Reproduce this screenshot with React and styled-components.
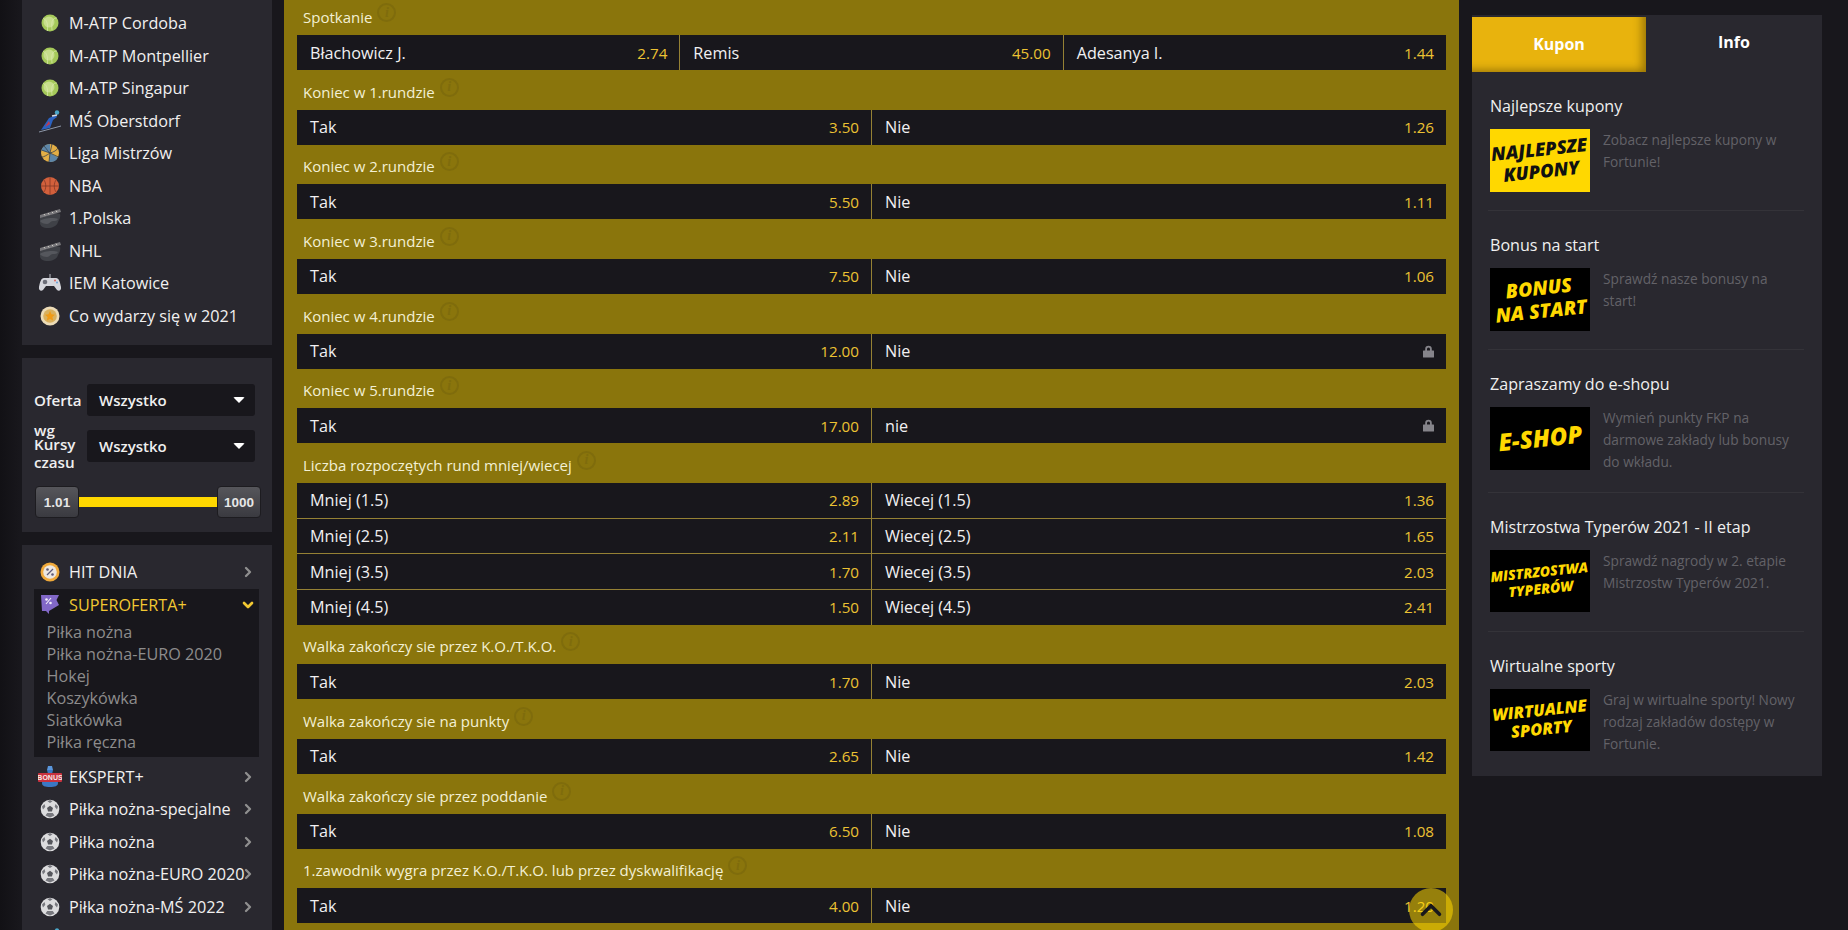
import styled, { createGlobalStyle } from "styled-components";
import { ChevronRight, ChevronDown, ChevronUp } from "lucide-react";

const topLinks = [
  ["tennis", "M-ATP Cordoba"],
  ["tennis", "M-ATP Montpellier"],
  ["tennis", "M-ATP Singapur"],
  ["ski", "MŚ Oberstdorf"],
  ["volley", "Liga Mistrzów"],
  ["basket", "NBA"],
  ["hockey", "1.Polska"],
  ["hockey", "NHL"],
  ["pad", "IEM Katowice"],
  ["star", "Co wydarzy się w 2021"],
];

const subLinks = ["Piłka nożna", "Piłka nożna-EURO 2020", "Hokej", "Koszykówka", "Siatkówka", "Piłka ręczna"];

const sportLinks = [
  ["bonus", "EKSPERT+"],
  ["soccer", "Piłka nożna-specjalne"],
  ["soccer", "Piłka nożna"],
  ["soccer", "Piłka nożna-EURO 2020"],
  ["soccer", "Piłka nożna-MŚ 2022"],
  ["ski", "Skoki narciarskie"],
];

const yesNo = (title, yes, no, noLabel = "Nie") => ({
  title,
  rows: [[["Tak", yes], [noLabel, no]]],
});

const markets = [
  { title: "Spotkanie", rows: [[["Błachowicz J.", "2.74"], ["Remis", "45.00"], ["Adesanya I.", "1.44"]]] },
  yesNo("Koniec w 1.rundzie", "3.50", "1.26"),
  yesNo("Koniec w 2.rundzie", "5.50", "1.11"),
  yesNo("Koniec w 3.rundzie", "7.50", "1.06"),
  yesNo("Koniec w 4.rundzie", "12.00", null),
  yesNo("Koniec w 5.rundzie", "17.00", null, "nie"),
  {
    title: "Liczba rozpoczętych rund mniej/wiecej",
    rows: [
      [["Mniej (1.5)", "2.89"], ["Wiecej (1.5)", "1.36"]],
      [["Mniej (2.5)", "2.11"], ["Wiecej (2.5)", "1.65"]],
      [["Mniej (3.5)", "1.70"], ["Wiecej (3.5)", "2.03"]],
      [["Mniej (4.5)", "1.50"], ["Wiecej (4.5)", "2.41"]],
    ],
  },
  yesNo("Walka zakończy sie przez K.O./T.K.O.", "1.70", "2.03"),
  yesNo("Walka zakończy sie na punkty", "2.65", "1.42"),
  yesNo("Walka zakończy sie przez poddanie", "6.50", "1.08"),
  yesNo("1.zawodnik wygra przez K.O./T.K.O. lub przez dyskwalifikację", "4.00", "1.20"),
];

const promos = [
  { title: "Najlepsze kupony", lines: ["NAJLEPSZE", "KUPONY"], size: 18.5, light: true, text: "Zobacz najlepsze kupony w Fortunie!" },
  { title: "Bonus na start", lines: ["BONUS", "NA START"], size: 19.5, text: "Sprawdź nasze bonusy na start!" },
  { title: "Zapraszamy do e-shopu", lines: ["E-SHOP"], size: 24, text: "Wymień punkty FKP na darmowe zakłady lub bonusy do wkładu." },
  { title: "Mistrzostwa Typerów 2021 - II etap", lines: ["MISTRZOSTWA", "TYPERÓW"], size: 14, text: "Sprawdź nagrody w 2. etapie Mistrzostw Typerów 2021." },
  { title: "Wirtualne sporty", lines: ["WIRTUALNE", "SPORTY"], size: 16.5, text: "Graj w wirtualne sporty! Nowy rodzaj zakładów dostępy w Fortunie." },
];

const GlobalStyle = createGlobalStyle`
  html, body {
    margin: 0;
    height: 100%;
    overflow: hidden;
    background: #18171c;
  }
  body {
    font-family: "Open Sans", "Noto Sans", sans-serif;
    color: #fff;
  }
  * {
    box-sizing: border-box;
  }
`;

const Page = styled.div`
  position: relative;
  display: flex;
  align-items: flex-start;
  height: 930px;
  padding-left: 22px;
  overflow: hidden;
  background: linear-gradient(90deg, #121115 0, #18171c 20px);
`;

const Sidebar = styled.aside`
  display: flex;
  flex-direction: column;
  gap: 13px;
  width: 250px;
  margin-right: 12px;
  flex-shrink: 0;
`;

const Panel = styled.div`
  background: #29282f;
  padding: ${(p) => p.$padding || "0"};
`;

const NavRow = styled.div`
  position: relative;
  display: flex;
  align-items: center;
  height: 32.5px;
  font-size: 16.2px;
  color: ${(p) => (p.$active ? "#f2c832" : "#f1f0f0")};
  white-space: nowrap;
`;

const NavIcon = styled.span`
  display: flex;
  align-items: center;
  justify-content: center;
  width: 35px;
  padding-right: 4px;
  flex-shrink: 0;
`;

const NavArrow = styled.span`
  position: absolute;
  right: 3px;
  top: 50%;
  display: flex;
  transform: translateY(-50%);
  color: ${(p) => (p.$active ? "#f2c832" : "#8f8f8f")};
`;

const ActiveGroup = styled.div`
  background: #18171c;
  padding-bottom: 4px;
  margin-bottom: 3.5px;
`;

const SubLink = styled.div`
  height: 22px;
  line-height: 22px;
  padding-left: 12.5px;
  font-size: 16.2px;
  color: #8d8c8c;
  white-space: nowrap;
`;

const FilterRow = styled.div`
  display: flex;
  align-items: center;
  height: ${(p) => p.$height}px;
  margin-bottom: ${(p) => p.$gap}px;
`;

const FilterLabel = styled.div`
  width: 53px;
  flex-shrink: 0;
  font-size: 15.2px;
  font-weight: 600;
  line-height: 14px;
  color: #efefef;
`;

const LabelLine = styled.div`
  margin-top: ${(p) => p.$top || 0}px;
`;

const Select = styled.div`
  display: flex;
  align-items: center;
  justify-content: space-between;
  width: 168px;
  height: 32px;
  padding: 0 10px 0 12px;
  background: #18171c;
  border-radius: 3px;
  font-size: 15px;
  font-weight: 600;
  color: #efefef;
`;

const Caret = styled.span`
  width: 0;
  height: 0;
  border-left: 6px solid transparent;
  border-right: 6px solid transparent;
  border-top: 6px solid #fff;
  border-radius: 2px;
`;

const Slider = styled.div`
  display: flex;
  align-items: center;
  width: 226px;
  margin-left: 1px;
`;

const Handle = styled.div`
  display: flex;
  align-items: center;
  justify-content: center;
  width: 44px;
  height: 32px;
  flex-shrink: 0;
  border: 1px solid #1d1c20;
  border-radius: 4px;
  background: linear-gradient(#56565b, #3a3a40);
  font-family: "Liberation Sans", Arial, sans-serif;
  font-size: 13.5px;
  font-weight: 700;
  color: #e6e6e6;
`;

const Track = styled.div`
  flex: 1;
  height: 10px;
  background: #ffd800;
`;

const Main = styled.main`
  width: 1175px;
  height: 930px;
  margin-right: 13px;
  flex-shrink: 0;
  padding: 0 13px;
  background: #8a750c;
  overflow: hidden;
`;

const Markets = styled.div`
  margin-top: -4.67px;
`;

const MarketHead = styled.div`
  display: flex;
  align-items: flex-end;
  height: 39.67px;
  padding: 0 0 8px 6px;
  font-size: 15px;
  line-height: 20px;
  color: #f3f0d4;
`;

const InfoMark = styled.span`
  display: inline-flex;
  align-items: center;
  justify-content: center;
  width: 19px;
  height: 19px;
  margin: 0 0 5px 5px;
  border: 2px solid #7f6c0c;
  border-radius: 50%;
  font-family: "Liberation Serif", serif;
  font-size: 14px;
  font-style: italic;
  font-weight: 700;
  color: #7f6c0c;
`;

const MarketRows = styled.div`
  display: flex;
  flex-direction: column;
  gap: 1px;
  background: #958134;
`;

const OddsRow = styled.div`
  display: grid;
  grid-template-columns: repeat(${(p) => p.$cols}, 1fr);
  gap: 1px;
`;

const OddsCell = styled.div`
  display: flex;
  align-items: center;
  justify-content: space-between;
  height: ${(p) => (p.$tight ? 34.67 : 35)}px;
  padding: 0 12px 0 13px;
  background: #18171c;
  font-size: 16.2px;
  color: #f1f0f2;
`;

const Odds = styled.span`
  font-size: 15.2px;
  color: #ecc233;
`;

const ScrollTop = styled.div`
  position: absolute;
  left: 1409px;
  top: 888px;
  display: flex;
  align-items: center;
  justify-content: center;
  width: 44px;
  height: 44px;
  border-radius: 50%;
  background: rgba(255, 215, 0, 0.55);
  color: #18171c;
`;

const Aside = styled.aside`
  width: 350px;
  margin-top: 15px;
  flex-shrink: 0;
  background: #29282f;
`;

const Tabs = styled.div`
  display: flex;
  height: 57px;
`;

const ActiveTab = styled.div`
  display: flex;
  align-items: center;
  justify-content: center;
  width: 174px;
  margin-top: 2px;
  padding-bottom: 2px;
  background: #e8b30d;
  box-shadow: inset -8px -6px 8px -4px rgba(90, 70, 0, 0.55);
  font-size: 16px;
  font-weight: 700;
`;

const Tab = styled.div`
  flex: 1;
  padding-top: 16px;
  text-align: center;
  font-size: 16px;
  font-weight: 700;
`;

const Promo = styled.div`
  margin: 0 18px 0 16px;
  padding: 23px 0 ${(p) => (p.$last ? 21 : 18.5)}px;
  border-bottom: ${(p) => (p.$last ? "none" : "1px solid #343339")};
`;

const PromoTitle = styled.div`
  height: 22px;
  margin: 0 0 12px 2px;
  font-size: 16.1px;
  line-height: 22px;
  color: #f0f0f0;
`;

const PromoBody = styled.div`
  display: flex;
  gap: 13px;
  margin-left: 2px;
`;

const Banner = styled.div`
  display: flex;
  flex-direction: column;
  align-items: center;
  justify-content: center;
  width: 100px;
  height: 62.5px;
  flex-shrink: 0;
  overflow: hidden;
  background: ${(p) => (p.$light ? "#ffd800" : "#000")};
  color: ${(p) => (p.$light ? "#111" : "#ffd800")};
  font-size: ${(p) => p.$size}px;
  font-style: italic;
  font-weight: 800;
  line-height: 1.18;
  white-space: nowrap;
`;

const BannerText = styled.div`
  transform: rotate(-6deg);
  text-align: center;
`;

const PromoText = styled.div`
  font-size: 13.7px;
  line-height: 22px;
  color: #636268;
`;

const Lock = () => (
  <svg width="11" height="13" viewBox="0 0 11 13">
    <path d="M2.2 6V4a3.3 3.3 0 0 1 6.6 0v2h-1.8V4a1.5 1.5 0 0 0-3 0v2z" fill="#85848a" />
    <rect x="0" y="5.6" width="11" height="7" rx="0.5" fill="#85848a" />
  </svg>
);

// small sport pictograms of the menu
const SportIcon = ({ kind }) => {
  switch (kind) {
    case "tennis":
      return (
        <svg width="20" height="20" viewBox="0 0 20 20">
          <circle cx="10" cy="10" r="8.5" fill="#a5c95a" />
          <circle cx="9" cy="9" r="5.5" fill="#c7de8c" />
          <path d="M3 5c3 2 5 3 4.500 13M17 5c-4 0-6 2-5 12" fill="none" stroke="#dcebb0" strokeWidth="0.7" />
        </svg>
      );
    case "ski":
      return (
        <svg width="24" height="24" viewBox="0 0 24 24">
          <path d="M1 23 23 17" stroke="#8d97a8" strokeWidth="1" />
          <path d="M3 21 11 9l7-3 1 2-4 3-3 8z" fill="#2b62c0" />
          <path d="M7 18l4-6 1 3z" fill="#c8384a" />
          <circle cx="19" cy="3.5" r="2.2" fill="#4aa7c9" />
          <path d="M14 7l5-1" stroke="#d7dbe2" strokeWidth="1.5" />
        </svg>
      );
    case "volley":
      return (
        <svg width="20" height="20" viewBox="0 0 20 20">
          <circle cx="10" cy="10" r="9" fill="#e3ae45" />
          <path d="M10 1a9 9 0 0 0-8.6 6.5L10 10z" fill="#5d86a8" />
          <path d="M10 10l8 4.5a9 9 0 0 1-9 4.5z" fill="#5d86a8" />
          <path d="M10 10 1.5 7M10 10l8.5 4M10 10l-1 9M10 10l2-9M4 3c3 3 4 6 6 7M10 10c4-1 7-3 8-5M10 10c-3 2-6 4-8 4" fill="none" stroke="#39424d" strokeWidth="0.8" />
        </svg>
      );
    case "basket":
      return (
        <svg width="20" height="20" viewBox="0 0 20 20">
          <circle cx="10" cy="10" r="9" fill="#d2603c" />
          <path d="M1 10h18M10 1v18M3.5 3.5c3 3 3 10 0 13M16.5 3.500c-3 3-3 10 0 13" fill="none" stroke="#7a3422" strokeWidth="0.7" />
        </svg>
      );
    case "hockey":
      return (
        <svg width="24" height="22" viewBox="0 0 24 22">
          <path d="M2 10c2-3 17-5 20-3 1 3-1 6-2 8-1 4-6 6-10 6-5 0-8-2-8-5z" fill="#3f4147" />
          <path d="M2 14c3-3 14-4 18-2-1 2-3 2-5 2-3 0-3 3-6 3-3 0-6-1-7-3z" fill="#55575d" />
          <path d="M2 8l20-6 1 3-21 6z" fill="#77767a" />
          <path d="M6 7l1 1.5M10 6l1 1.5M14 4.800l1 1.500M18 3.600l1 1.500" stroke="#d5d3cc" strokeWidth="1" />
        </svg>
      );
    case "pad":
      return (
        <svg width="24" height="22" viewBox="0 0 24 22">
          <path d="M6 6h12c3 0 4 4 5 9 .6 3-2 5-4 3l-3-4H8l-3 4c-2 2-4.600 0-4-3 1-5 2-9 5-9z" fill="#d5d6dc" />
          <circle cx="7" cy="10" r="2.300" fill="#6c6e78" />
          <circle cx="17" cy="8.500" r="1" fill="#d9655f" />
          <circle cx="19" cy="10.500" r="1" fill="#6aa0d8" />
          <path d="M12 6V2" stroke="#c0c1c8" strokeWidth="1" />
        </svg>
      );
    case "star":
      return (
        <svg width="20" height="20" viewBox="0 0 20 20">
          <circle cx="10" cy="10" r="9.500" fill="#ecdcb8" />
          <circle cx="10" cy="10" r="6.800" fill="#d9b15e" />
          <path d="M10 5l1.500 3.300 3.500.4-2.600 2.400.7 3.500L10 12.900l-3.100 1.700.7-3.500L5 8.700l3.500-.4z" fill="#f09b16" />
        </svg>
      );
    case "hit":
      return (
        <svg width="20" height="20" viewBox="0 0 20 20">
          <circle cx="10" cy="10" r="9.500" fill="#efa93a" />
          <circle cx="10" cy="10" r="6.800" fill="#ece7e0" />
          <path d="M7 13l6-6" stroke="#5d5a78" strokeWidth="1.300" />
          <circle cx="7.500" cy="7.500" r="1.300" fill="#5d5a78" />
          <circle cx="12.500" cy="12.500" r="1.300" fill="#5d5a78" />
        </svg>
      );
    case "super":
      return (
        <svg width="20" height="22" viewBox="0 0 20 22">
          <path d="M1 1h18l-2.500 5L19 11 9 17v3l-3-3H2z" fill="#8268c8" />
          <path d="M6 10l5-6" stroke="#f2f0fa" strokeWidth="1.100" />
          <circle cx="6.500" cy="5.500" r="1.300" fill="#f2f0fa" />
          <circle cx="10.500" cy="9" r="1.300" fill="#f2f0fa" />
        </svg>
      );
    case "bonus":
      return (
        <svg width="24" height="22" viewBox="0 0 24 22">
          <path d="M9 4h6l-1 4c4 1 6 5 6 9 0 3-3 4-8 4s-8-1-8-4c0-4 2-8 6-9z" fill="#3a78c4" />
          <path d="M10 0h4l1 4H9z" fill="#5a96dc" />
          <rect x="0" y="7" width="24" height="9" rx="1" fill="#c8323f" />
          <text x="12" y="14.200" textAnchor="middle" fontSize="7" fontWeight="700" fontFamily="Liberation Sans" fill="#f6e6e6">BONUS</text>
        </svg>
      );
    default:
      return (
        <svg width="20" height="20" viewBox="0 0 20 20">
          <circle cx="10" cy="10" r="9.300" fill="#dcdcde" />
          <path d="M10 6.800l3 2.200-1.100 3.500H8.100L7 9z" fill="#55565c" />
          <path d="M10 1l2.500 1.300L10 4 7.500 2.300zM2 7.500 4.500 5l.8 2.700L3 10.500zM18 7.500 15.500 5l-.8 2.700 2.300 2.800zM5.500 16.500 7.200 14h5.600l1.700 2.500-4.500 2z" fill="#77787e" />
        </svg>
      );
  }
};

const NavItem = ({ icon, label, arrow, active }) => (
  <NavRow $active={active}>
    <NavIcon>
      <SportIcon kind={icon} />
    </NavIcon>
    {label}
    {arrow && (
      <NavArrow $active={active}>
        {active ? <ChevronDown size={16} strokeWidth={4} /> : <ChevronRight size={16} strokeWidth={3.5} />}
      </NavArrow>
    )}
  </NavRow>
);

const Market = ({ market }) => (
  <section>
    <MarketHead>
      {market.title}
      <InfoMark>i</InfoMark>
    </MarketHead>
    <MarketRows>
      {market.rows.map((row, i) => (
        <OddsRow key={i} $cols={row.length}>
          {row.map(([label, value]) => (
            <OddsCell key={label} $tight={market.rows.length > 1}>
              {label}
              {value ? <Odds>{value}</Odds> : <Lock />}
            </OddsCell>
          ))}
        </OddsRow>
      ))}
    </MarketRows>
  </section>
);

const App = () => (
  <>
    <GlobalStyle />
    <Page>
      <Sidebar>
        <Panel $padding="7px 0 13px 12px">
          {topLinks.map(([icon, label]) => (
            <NavItem key={label} icon={icon} label={label} />
          ))}
        </Panel>
        <Panel $padding="26px 0 14px 12px">
          <FilterRow $height={32} $gap={13}>
            <FilterLabel>Oferta</FilterLabel>
            <Select>
              Wszystko
              <Caret />
            </Select>
          </FilterRow>
          <FilterRow $height={33} $gap={24}>
            <FilterLabel>
              <LabelLine>wg</LabelLine>
              <LabelLine>Kursy</LabelLine>
              <LabelLine $top={4}>czasu</LabelLine>
            </FilterLabel>
            <Select>
              Wszystko
              <Caret />
            </Select>
          </FilterRow>
          <Slider>
            <Handle>1.01</Handle>
            <Track />
            <Handle>1000</Handle>
          </Slider>
        </Panel>
        <Panel $padding="11px 13px 0 12px">
          <NavItem icon="hit" label="HIT DNIA" arrow />
          <ActiveGroup>
            <NavItem icon="super" label="SUPEROFERTA+" arrow active />
            {subLinks.map((label) => (
              <SubLink key={label}>{label}</SubLink>
            ))}
          </ActiveGroup>
          {sportLinks.map(([icon, label]) => (
            <NavItem key={label} icon={icon} label={label} arrow />
          ))}
        </Panel>
      </Sidebar>
      <Main>
        <Markets>
          {markets.map((market) => (
            <Market key={market.title} market={market} />
          ))}
        </Markets>
      </Main>
      <Aside>
        <Tabs>
          <ActiveTab>Kupon</ActiveTab>
          <Tab>Info</Tab>
        </Tabs>
        {promos.map((promo, i) => (
          <Promo key={promo.title} $last={i === promos.length - 1}>
            <PromoTitle>{promo.title}</PromoTitle>
            <PromoBody>
              <Banner $light={promo.light} $size={promo.size}>
                <BannerText>
                  {promo.lines.map((line) => (
                    <div key={line}>{line}</div>
                  ))}
                </BannerText>
              </Banner>
              <PromoText>{promo.text}</PromoText>
            </PromoBody>
          </Promo>
        ))}
      </Aside>
      <ScrollTop>
        <ChevronUp size={34} strokeWidth={2.5} />
      </ScrollTop>
    </Page>
  </>
);

export default App;
